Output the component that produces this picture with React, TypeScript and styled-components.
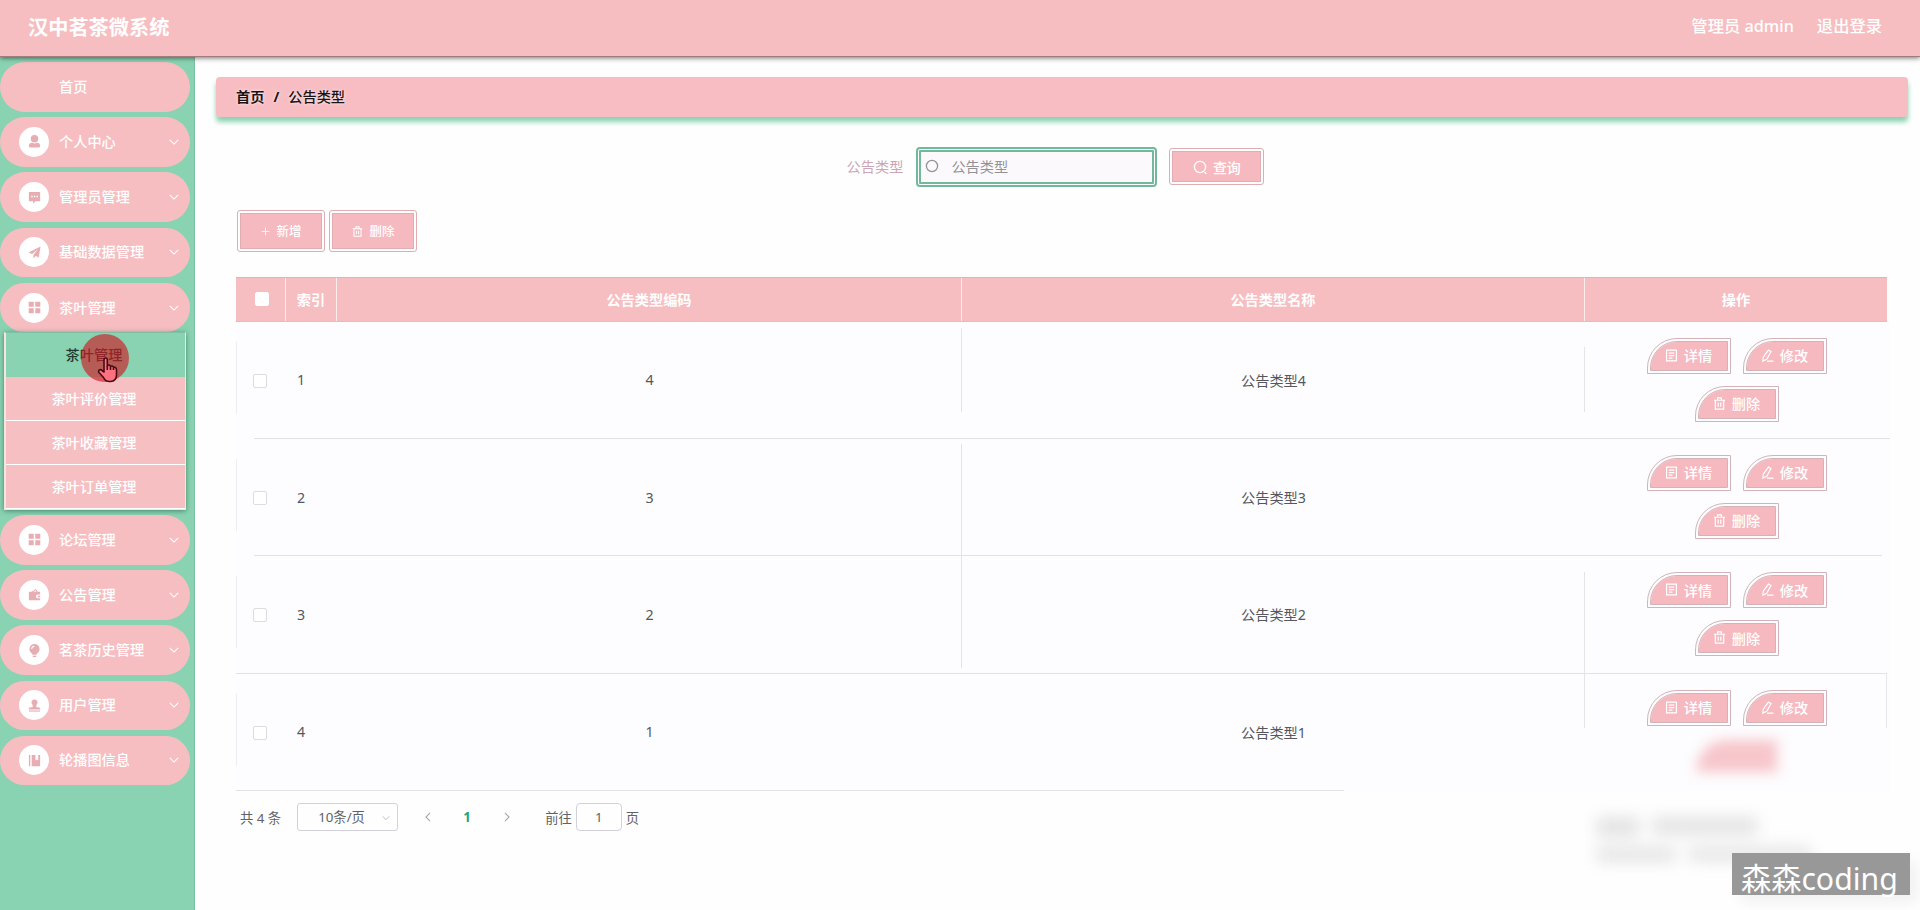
import React from "react";
import styled, { createGlobalStyle, css } from "styled-components";

const pink = "#f7bec2";
const green = "#8ad3b2";

const GlobalStyle = createGlobalStyle`
  * { box-sizing: border-box; }
  body {
    margin: 0;
    background: #fefefe;
    font-family: "Noto Sans", "Noto Sans CJK SC", sans-serif;
    font-size: 14.2px;
    color: #55575c;
    overflow: hidden;
  }
`;

const Page = styled.div`
  height: 910px;
  display: flex;
  flex-direction: column;
  position: relative;
  overflow: hidden;
`;

const Header = styled.header`
  height: 57px;
  flex: none;
  display: flex;
  align-items: center;
  padding: 0 38px 4px 28px;
  background: #f6bec0;
  border-bottom: 1px solid #a07c7c;
  box-shadow: 0 1px 5px rgba(0, 0, 0, 0.55);
  color: #fff;
  position: relative;
  z-index: 1;
`;

const Title = styled.h1`
  margin: 2px auto 0 0;
  font-size: 20.2px;
  font-weight: 700;
  line-height: 28px;
`;

const HeaderLink = styled.span`
  font-size: 16.3px;
  font-weight: 500;
  margin-left: 23px;
  line-height: 24px;
`;

const Body = styled.div`
  flex: 1;
  display: flex;
  min-height: 0;
`;

const Sidebar = styled.nav`
  width: 195px;
  flex: none;
  background: ${green};
  border-right: 1px solid #7bbfa2;
  padding-top: 5px;
`;

const MenuItem = styled.div`
  width: 190px;
  height: 49.6px;
  margin-bottom: 5.6px;
  border-radius: 25px;
  background: ${pink};
  display: flex;
  align-items: center;
  padding: 0 11px 0 19px;
  color: #fff;
`;

const IconDisc = styled.span<{ $blank?: boolean }>`
  width: 30px;
  height: 30px;
  border-radius: 50%;
  margin-right: 10px;
  background: ${(p) => (p.$blank ? "transparent" : "#fff")};
  display: flex;
  align-items: center;
  justify-content: center;
  color: #e8acb3;
`;

const MenuLabel = styled.span`
  flex: 1;
  font-size: 14.2px;
  font-weight: 500;
  line-height: 20px;
`;

const SubMenu = styled.div`
  width: 182px;
  margin: -6px 0 5px 4px;
  border: 1px solid #f6e4e2;
  border-left-width: 2px;
  border-top-color: #7fc0a4;
  box-shadow: 0 1px 5px rgba(30, 80, 60, 0.6);
`;

const SubItem = styled.div<{ $active?: boolean }>`
  height: 44px;
  display: flex;
  align-items: center;
  justify-content: center;
  padding: 0 3px 1px 0;
  font-size: 14.2px;
  font-weight: 500;
  background: ${(p) => (p.$active ? green : "#f6bfc2")};
  color: ${(p) => (p.$active ? "#233a32" : "#fff")};
  border-bottom: 1px solid ${(p) => (p.$active ? green : "#fff")};
  position: relative;
`;

const ClickMark = styled.span`
  position: absolute;
  left: 75px;
  top: 1px;
  width: 48px;
  height: 48px;
  border-radius: 50%;
  background: rgba(205, 25, 35, 0.64);
  z-index: 2;
  svg { position: absolute; left: 16px; top: 23px; }
`;

const Main = styled.main`
  flex: 1;
  padding: 20px 12px 0 21px;
`;

const Breadcrumb = styled.div`
  height: 40px;
  border-radius: 4px;
  background: #f7bdc2;
  box-shadow: 0 5px 5px ${green};
  display: flex;
  align-items: center;
  padding: 0 0 2px 20px;
  color: #1c1214;
  font-weight: 500;
  text-shadow: 0 0 3px #fff;
`;

const Crumb = styled.span<{ $strong?: boolean }>`
  font-weight: ${(p) => (p.$strong ? 700 : 500)};
`;

const Slash = styled.span`
  font-weight: 700;
  margin: 0 9px;
`;

const Content = styled.div`
  padding: 30px 20px 0 20px;
`;

const SearchBar = styled.div`
  height: 40px;
  display: flex;
  justify-content: center;
  align-items: center;
  margin-right: 13px;
`;

const SearchLabel = styled.label`
  color: #cba7b5;
  margin: 0 13px 2px 0;
`;

const SearchBox = styled.div`
  width: 241px;
  height: 40px;
  border: 5px double #71b89d;
  border-radius: 4px;
  background: #fbf9fb;
  background-clip: padding-box;
  display: flex;
  align-items: center;
  padding: 0 0 2px 4px;
  gap: 12px;
  color: #929297;
  margin-right: 12px;
`;

const Button = styled.button<{ $kind: "search" | "tool" | "row"; $faded?: boolean }>`
  font-family: inherit;
  border: 4px double #e0aeb1;
  background: #f5b9bf;
  background-clip: padding-box;
  border-radius: 3px;
  color: #fff;
  display: inline-flex;
  align-items: center;
  justify-content: center;
  padding: 0;
  font-weight: 500;
  ${(p) => p.$kind === "search" && css`
    width: 95px; height: 37px; font-size: 14px; gap: 6px; padding-top: 1px; margin-top: -1px;
  `}
  ${(p) => p.$kind === "tool" && css`
    width: 88px; height: 42px; font-size: 12.4px; gap: 7px; margin-right: 4px;
  `}
  ${(p) => p.$kind === "row" && css`
    width: 84px; height: 36px; font-size: 14.2px; gap: 6px; border-radius: 30px 0 0 0; border-color: #d3b3b6; padding-bottom: 1px;
  `}
  ${(p) => p.$faded && css`
    filter: blur(6px); opacity: 0.8; border-color: #f5b9bf;
  `}
`;

const Toolbar = styled.div`
  display: flex;
  padding: 23px 0 0 1px;
  height: 90px;
`;

const columns = "50px 51px 625px 623px 302px";

const Table = styled.div`
  width: 1651px;
`;

const HeadRow = styled.div`
  display: grid;
  grid-template-columns: ${columns};
  height: 44.5px;
  background: #f6bec1;
  border-top: 1px solid #e5b0b3;
  border-bottom: 1px solid #eab9ba;
`;

const HeadCell = styled.div<{ $last?: boolean }>`
  border-right: ${(p) => (p.$last ? "0" : "1px solid #fdeeee")};
  display: flex;
  align-items: center;
  justify-content: center;
  padding-bottom: 1px;
  color: #fff;
  font-weight: 700;
`;

const Row = styled.div<{ $from: number; $to: number }>`
  height: 117.4px;
  display: grid;
  grid-template-columns: ${columns};
  background: linear-gradient(#e3e1e4, #e3e1e4) ${(p) => p.$from}px 100% / ${(p) => p.$to - p.$from}px 1px no-repeat #fdfcfe;
  width: 1654px;
`;

const Cell = styled.div<{ $left?: boolean; $rule?: number; $start?: number }>`
  display: flex;
  align-items: center;
  justify-content: ${(p) => (p.$left ? "flex-start" : "center")};
  padding-left: ${(p) => (p.$left ? 11 : 0)}px;
  padding-bottom: 1px;
  background: linear-gradient(#e6e4e7, #e6e4e7) 100% ${(p) => p.$start ?? 0}px / 1px ${(p) => p.$rule ?? 0}px no-repeat;
`;

const CheckCell = styled(Cell)`
  justify-content: flex-start;
  padding: 1px 0 0 17px;
  background: linear-gradient(#eeedef, #eeedef) 0 20px / 1px 72px no-repeat;
`;

const Check = styled.span<{ $solid?: boolean }>`
  width: 14px;
  height: 14px;
  border: 1px solid ${(p) => (p.$solid ? "#fff" : "#dedce0")};
  border-radius: 2px;
  background: #fff;
  margin-left: ${(p) => (p.$solid ? 2 : 0)}px;
`;

const Actions = styled.div<{ $edge?: boolean }>`
  display: flex;
  flex-wrap: wrap;
  justify-content: center;
  align-content: flex-start;
  gap: 12px;
  padding: 16px 39px 0 40px;
  background: ${(p) => (p.$edge ? "linear-gradient(#e8e6e9, #e8e6e9) 100% 0 / 1px 54px no-repeat" : "none")};
`;

const Pager = styled.div`
  display: flex;
  align-items: center;
  height: 30px;
  margin-top: 11px;
  padding-left: 4px;
  font-size: 13.3px;
  color: #606266;
`;

const Select = styled.div`
  width: 101px;
  height: 28px;
  border: 1px solid #d3d0dc;
  border-radius: 3px;
  margin-left: 16px;
  display: flex;
  align-items: center;
  justify-content: space-between;
  padding: 0 7px 1px 20px;
  svg { color: #b4b1bb; margin-top: 3px; }
`;

const Arrow = styled.span<{ $gap: number }>`
  display: flex;
  color: #a9a5af;
  margin-left: ${(p) => p.$gap}px;
`;

const Current = styled.b`
  color: #25a27c;
  width: 20px;
  margin-left: 24px;
  text-align: center;
`;

const PageInput = styled.div`
  width: 46px;
  height: 28px;
  margin: 0 4px;
  border: 1px solid #d3d0dc;
  border-radius: 4px;
  display: flex;
  align-items: center;
  justify-content: center;
`;

const Goto = styled.span`
  margin-left: 33px;
`;

const SoftMarks = styled.div`
  position: absolute;
  left: 1597px;
  top: 818px;
  width: 230px;
  display: flex;
  flex-wrap: wrap;
  gap: 12px 14px;
  filter: blur(8px);
`;

const SoftBar = styled.span<{ $w: number; $h: number }>`
  width: ${(p) => p.$w}px;
  height: ${(p) => p.$h}px;
  background: #e0e0e1;
`;

const Signature = styled.div`
  position: absolute;
  left: 1732px;
  top: 853px;
  width: 178px;
  height: 42px;
  background: #989898;
  box-shadow: 8px 8px 14px rgba(0, 0, 0, 0.05);
  color: #fff;
  font-size: 30.2px;
  line-height: 51px;
  white-space: nowrap;
  padding-left: 9px;
`;

type IconName = "user" | "chat" | "send" | "grid" | "wallet" | "bulb" | "stamp" | "book";

const glyphs: Record<IconName, React.ReactNode> = {
  user: <><circle cx="8" cy="5" r="4" /><path d="M2 13c0-3 2-3.600 3.500-3.600Q8 11 10.500 9.400C12 9.400 14 10 14 13q0 1.500-1.500 1.500h-9Q2 14.500 2 13z" /></>,
  chat: <path fillRule="evenodd" d="M2 2h12v10H9l-2.500 2.700V12H2zM4.500 6.200v1.500H6V6.200zm2.800 0v1.500h1.500V6.200zm2.800 0v1.500h1.500V6.200z" />,
  send: <path d="M14.500 1.500 1.500 8l4 1.700 6-5.200-4.600 6v4l2.300-2.800 3.300 1.600z" />,
  grid: <path d="M1.800 1.800h5.400v5.400H1.800zM8.800 1.800h5.400v5.400H8.800zM1.800 8.800h5.400v5.400H1.800zM8.800 8.800h5.400v5.400H8.800z" />,
  wallet: <path fillRule="evenodd" d="M2 5h3l4.500-3 2 3H14v3h-2.500a2 2 0 0 0 0 4H14v2H2zm9.500 4.300H14v1.500h-2.500zM7 5h3L9.200 3.500z" />,
  bulb: <><path fillRule="evenodd" d="M8 1a5.500 5.500 0 0 1 3 10l-1 1.500H6L5 11A5.500 5.500 0 0 1 8 1zM4.500 6.500h1A2.700 2.700 0 0 1 8 3.900V3a3.600 3.600 0 0 0-3.500 3.500z" /><path d="M6.200 13.500h3.600V15H6.200z" /></>,
  stamp: <><path d="M8 1.500a3.200 3.200 0 0 1 2.200 5.600L9.800 9.500l4.200 1v1.700H2v-1.700l4.200-1-.4-2.400A3.200 3.200 0 0 1 8 1.500z" /><path d="M2 13.300h12v1.200H2z" /></>,
  book: <path d="M2 2h1.500v12H2zM5 2h4v6l1.500-1.200L12 8V2h2v12H5z" />,
};

const Glyph = ({ name }: { name: IconName }) => (
  <svg width="15" height="15" viewBox="0 0 16 16" fill="currentColor">{glyphs[name]}</svg>
);

const Chevron = ({ turn = 0, size = 10 }: { turn?: number; size?: number }) => (
  <svg width={size} height={size} viewBox="0 0 12 12" fill="none" stroke="currentColor" strokeWidth="1.3">
    <path d="M1 3.500 6 8.500 11 3.500" transform={`rotate(${turn} 6 6)`} />
  </svg>
);

const lines = {
  search: <><circle cx="7" cy="7" r="5.600" /><path d="m11.500 12 2 2" /></>,
  ring: <circle cx="7" cy="7" r="5.600" />,
  plus: <path d="M7 1v12M1 7h12" />,
  trash: <path d="M1 3.500h12M5 3.200V1h4v2.200M2.500 3.800V13h9V3.800M5.600 6v4.500M8.400 6v4.500" />,
  doc: <path d="M1.700 1.200h10.600v11.600H1.700zM4 4.500h6M4 7.200h6M4 9.800h4" />,
  edit: <path d="M8 1.200 10.800 2.700 6.200 11 2 13l.4-4.200zM6.500 13h7" />,
};

const LineIcon = ({ name, size = 13 }: { name: keyof typeof lines; size?: number }) => (
  <svg width={size} height={size} viewBox="0 0 14 14" fill="none" stroke="currentColor" strokeWidth="1.3">{lines[name]}</svg>
);

const Hand = () => (
  <svg width="21" height="26" viewBox="0 0 21 26" fill="#ff7181" stroke="#4a0b13" strokeWidth="1.600" strokeLinejoin="round">
    <path d="M7 15V3q0-2 1.700-2t1.600 2v6q.3-1.200 1.700-1 1.500.2 1.500 1.800.4-1.100 1.700-.8 1.300.4 1.300 1.800.3-.9 1.500-.6Q19.500 10.700 19.500 13v5q0 6-6 6.500-5 .4-7-4L2 15.500q-1-1.700.4-2.500T5 13.500z" />
    <path d="M10.300 9v4M13.500 10v3M16.500 11v2" fill="none" />
  </svg>
);

const Entry = ({ icon, label }: { icon?: IconName; label: string }) => (
  <MenuItem>
    <IconDisc $blank={!icon}>{icon && <Glyph name={icon} />}</IconDisc>
    <MenuLabel>{label}</MenuLabel>
    {icon && <Chevron />}
  </MenuItem>
);

const upper: [IconName | undefined, string][] = [
  [undefined, "首页"],
  ["user", "个人中心"],
  ["chat", "管理员管理"],
  ["send", "基础数据管理"],
  ["grid", "茶叶管理"],
];

const lower: [IconName, string][] = [
  ["grid", "论坛管理"],
  ["wallet", "公告管理"],
  ["bulb", "茗茶历史管理"],
  ["stamp", "用户管理"],
  ["book", "轮播图信息"],
];

const rows = [
  { code: 4, from: 18, to: 1654, mid: [6, 84], end: [25, 65] },
  { code: 3, from: 18, to: 1646, mid: [5, 112], end: [0, 0] },
  { code: 2, from: 0, to: 1651, mid: [0, 112], end: [16, 101] },
  { code: 1, from: 0, to: 1108, mid: [0, 0], end: [0, 54] },
];

export default function App() {
  return (
    <Page>
      <GlobalStyle />
      <Header>
        <Title>汉中茗茶微系统</Title>
        <HeaderLink>管理员 admin</HeaderLink>
        <HeaderLink>退出登录</HeaderLink>
      </Header>
      <Body>
        <Sidebar>
          {upper.map(([icon, label]) => <Entry key={label} icon={icon} label={label} />)}
          <SubMenu>
            <SubItem $active>
              茶叶管理
              <ClickMark><Hand /></ClickMark>
            </SubItem>
            <SubItem>茶叶评价管理</SubItem>
            <SubItem>茶叶收藏管理</SubItem>
            <SubItem>茶叶订单管理</SubItem>
          </SubMenu>
          {lower.map(([icon, label]) => <Entry key={label} icon={icon} label={label} />)}
        </Sidebar>
        <Main>
          <Breadcrumb>
            <Crumb $strong>首页</Crumb>
            <Slash>/</Slash>
            <Crumb>公告类型</Crumb>
          </Breadcrumb>
          <Content>
            <SearchBar>
              <SearchLabel>公告类型</SearchLabel>
              <SearchBox>
                <LineIcon name="ring" size={14} />
                <span>公告类型</span>
              </SearchBox>
              <Button $kind="search"><LineIcon name="search" size={14} />查询</Button>
            </SearchBar>
            <Toolbar>
              <Button $kind="tool"><LineIcon name="plus" size={9} />新增</Button>
              <Button $kind="tool"><LineIcon name="trash" size={11} />删除</Button>
            </Toolbar>
            <Table>
              <HeadRow>
                <HeadCell><Check $solid /></HeadCell>
                <HeadCell>索引</HeadCell>
                <HeadCell>公告类型编码</HeadCell>
                <HeadCell>公告类型名称</HeadCell>
                <HeadCell $last>操作</HeadCell>
              </HeadRow>
              {rows.map((row, i) => (
                <Row key={row.code} $from={row.from} $to={row.to}>
                  <CheckCell><Check /></CheckCell>
                  <Cell $left>{i + 1}</Cell>
                  <Cell $start={row.mid[0]} $rule={row.mid[1]}>{row.code}</Cell>
                  <Cell $start={row.end[0]} $rule={row.end[1]}>公告类型{row.code}</Cell>
                  <Actions $edge={row.code === 1}>
                    <Button $kind="row"><LineIcon name="doc" />详情</Button>
                    <Button $kind="row"><LineIcon name="edit" />修改</Button>
                    {row.code === 1
                      ? <Button $kind="row" $faded aria-label="删除" />
                      : <Button $kind="row"><LineIcon name="trash" />删除</Button>}
                  </Actions>
                </Row>
              ))}
            </Table>
            <Pager>
              <span>共 4 条</span>
              <Select>10条/页<Chevron size={8} /></Select>
              <Arrow $gap={25}><Chevron turn={90} /></Arrow>
              <Current>1</Current>
              <Arrow $gap={25}><Chevron turn={-90} /></Arrow>
              <Goto>前往</Goto>
              <PageInput>1</PageInput>
              <span>页</span>
            </Pager>
          </Content>
        </Main>
      </Body>
      <SoftMarks>
        <SoftBar $w={42} $h={18} />
        <SoftBar $w={104} $h={16} />
        <SoftBar $w={78} $h={13} />
        <SoftBar $w={122} $h={12} />
      </SoftMarks>
      <Signature>森森coding</Signature>
    </Page>
  );
}
